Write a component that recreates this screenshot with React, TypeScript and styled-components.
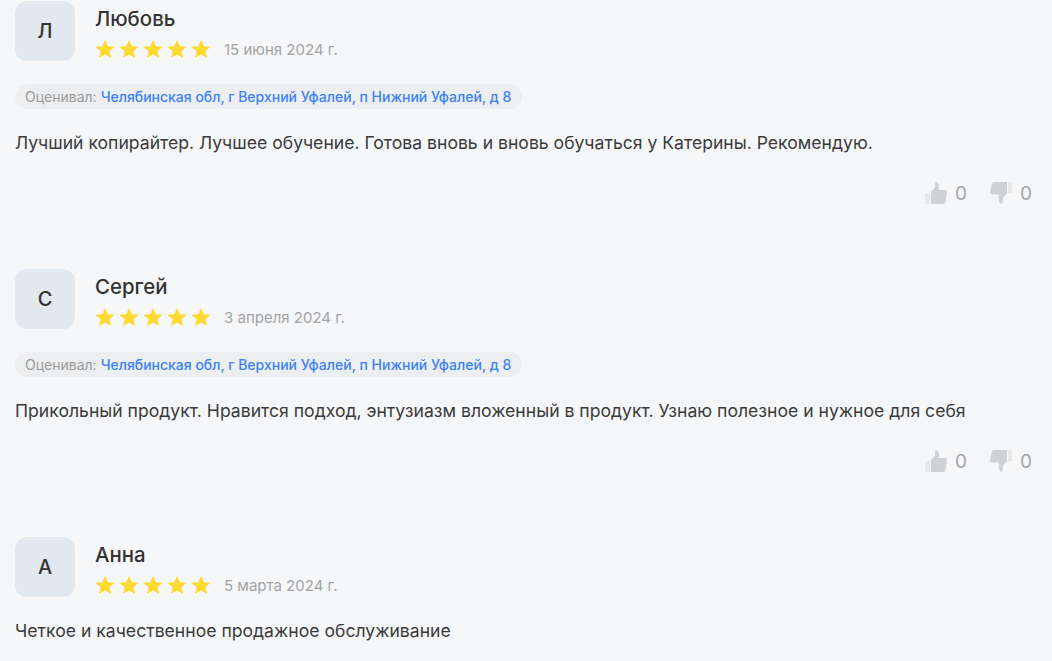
import styled, { createGlobalStyle } from "styled-components";

const GlobalStyle = createGlobalStyle`
  html, body {
    margin: 0;
    padding: 0;
    height: 100%;
    overflow: hidden;
    background: #f6f7f9;
    font-family: Inter, "Liberation Sans", sans-serif;
  }
`;

const Page = styled.div`
  padding: 1px 0 0 15px;
  width: 1037px;
  height: 660px;
  overflow: hidden;
`;

const Review = styled.article`
  height: 268px;
`;

const Head = styled.div`
  display: flex;
  gap: 20px;
`;

const Avatar = styled.div`
  width: 60px;
  height: 60px;
  border-radius: 12px;
  background: #e2e8f0;
  color: #333;
  font-size: 20px;
  font-weight: 500;
  display: flex;
  align-items: center;
  justify-content: center;
`;

const Name = styled.div`
  font-size: 20.4px;
  line-height: 22px;
  font-weight: 500;
  color: #333;
  margin-top: 6.5px;
`;

const Meta = styled.div`
  display: flex;
  align-items: center;
  margin-top: 9.5px;
`;

const Stars = styled.div`
  display: flex;
  gap: 4px;
  margin-right: 13px;
`;

const DateText = styled.span`
  font-size: 15px;
  color: #a3a3a3;
`;

const Region = styled.div`
  display: inline-flex;
  align-items: center;
  height: 25px;
  margin-top: 23px;
  padding: 0 11px 0 10px;
  border-radius: 13px;
  background: #eceef0;
  font-size: 14px;
  color: #999;
  gap: 4px;
  a {
    color: #3b82f6;
    text-decoration: none;
    font-weight: 500;
  }
`;

const Body = styled.p`
  margin: 21px 0 0;
  font-size: 17.6px;
  line-height: 26px;
  color: #3a3a3a;
`;

const Votes = styled.div`
  display: flex;
  justify-content: flex-end;
  align-items: center;
  gap: 22px;
  margin-top: 25px;
  padding-right: 20px;
`;

const Vote = styled.div`
  display: flex;
  align-items: center;
  gap: 7px;
  font-size: 19px;
  color: #a3a3a3;
`;

function Star() {
  return (
    <svg width="20" height="20" viewBox="0 0 24 24" fill="#ffd92e">
      <path d="M12 1l3.300 7.600 8.200.7-6.200 5.400 1.900 8.100L12 18.500l-7.200 4.300 1.900-8.100L.5 9.300l8.200-.7z" />
    </svg>
  );
}

function ThumbUp() {
  return (
    <svg width="24" height="24" viewBox="0 0 24 24">
      <path fill="#e6e8ea" d="M1 12h5v11H3a2 2 0 0 1-2-2z" />
      <path
        fill="#cfd1d4"
        d="M7 11l4-5V2.500a1.500 1.500 0 0 1 3 0c1 1.500 1.200 4 .6 6.500H21a2 2 0 0 1 2 2l-1.500 10a2 2 0 0 1-2 2H7z"
      />
    </svg>
  );
}

function ThumbDown() {
  return (
    <svg width="24" height="24" viewBox="0 0 24 24">
      <path fill="#e6e8ea" d="M23 12h-4V1h2a2 2 0 0 1 2 2z" />
      <path
        fill="#cfd1d4"
        d="M18 1H5a2 2 0 0 0-2 1.500L1 11a2 2 0 0 0 2 2.500h7c-.6 2.500-.4 6 .8 8.500a1.500 1.500 0 0 0 2.700-.5l.5-5 4-4z"
      />
    </svg>
  );
}

const reviews = [
  {
    initial: "Л",
    name: "Любовь",
    date: "15 июня 2024 г.",
    region: true,
    text: "Лучший копирайтер. Лучшее обучение. Готова вновь и вновь обучаться у Катерины. Рекомендую.",
  },
  {
    initial: "С",
    name: "Сергей",
    date: "3 апреля 2024 г.",
    region: true,
    text: "Прикольный продукт. Нравится подход, энтузиазм вложенный в продукт. Узнаю полезное и нужное для себя",
  },
  {
    initial: "А",
    name: "Анна",
    date: "5 марта 2024 г.",
    region: false,
    text: "Четкое и качественное продажное обслуживание",
  },
];

export default function App() {
  return (
    <Page>
      <GlobalStyle />
      {reviews.map((r) => (
        <Review key={r.name}>
          <Head>
            <Avatar>{r.initial}</Avatar>
            <div>
              <Name>{r.name}</Name>
              <Meta>
                <Stars>
                  {[0, 1, 2, 3, 4].map((i) => (
                    <Star key={i} />
                  ))}
                </Stars>
                <DateText>{r.date}</DateText>
              </Meta>
            </div>
          </Head>
          {r.region && (
            <Region>
              Оценивал:
              <a href="#">Челябинская обл, г Верхний Уфалей, п Нижний Уфалей, д 8</a>
            </Region>
          )}
          <Body>{r.text}</Body>
          {r.region && (
            <Votes>
              <Vote>
                <ThumbUp />0
              </Vote>
              <Vote>
                <ThumbDown />0
              </Vote>
            </Votes>
          )}
        </Review>
      ))}
    </Page>
  );
}
